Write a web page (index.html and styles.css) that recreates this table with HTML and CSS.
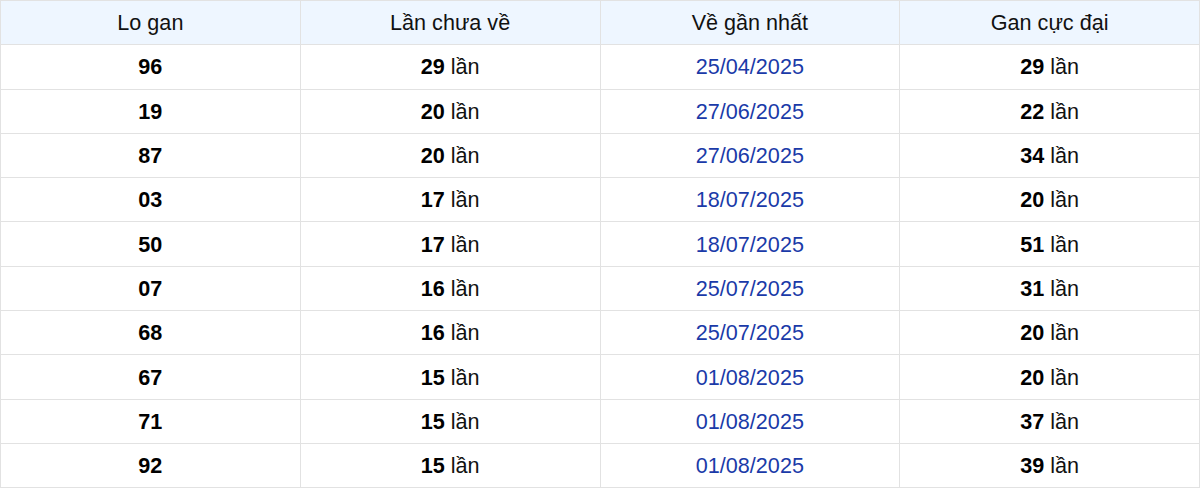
FILE: index.html
```html
<!DOCTYPE html>
<html lang="vi">
<head>
<meta charset="utf-8">
<link rel="stylesheet" href="styles.css">
</head>
<body>
<table class="gan">
  <thead>
    <tr><th>Lo gan</th><th>Lần chưa về</th><th>Về gần nhất</th><th>Gan cực đại</th></tr>
  </thead>
  <tbody>
    <tr><td><b>96</b></td><td><b>29</b> lần</td><td class="date">25/04/2025</td><td><b>29</b> lần</td></tr>
    <tr><td><b>19</b></td><td><b>20</b> lần</td><td class="date">27/06/2025</td><td><b>22</b> lần</td></tr>
    <tr><td><b>87</b></td><td><b>20</b> lần</td><td class="date">27/06/2025</td><td><b>34</b> lần</td></tr>
    <tr><td><b>03</b></td><td><b>17</b> lần</td><td class="date">18/07/2025</td><td><b>20</b> lần</td></tr>
    <tr><td><b>50</b></td><td><b>17</b> lần</td><td class="date">18/07/2025</td><td><b>51</b> lần</td></tr>
    <tr><td><b>07</b></td><td><b>16</b> lần</td><td class="date">25/07/2025</td><td><b>31</b> lần</td></tr>
    <tr><td><b>68</b></td><td><b>16</b> lần</td><td class="date">25/07/2025</td><td><b>20</b> lần</td></tr>
    <tr><td><b>67</b></td><td><b>15</b> lần</td><td class="date">01/08/2025</td><td><b>20</b> lần</td></tr>
    <tr><td><b>71</b></td><td><b>15</b> lần</td><td class="date">01/08/2025</td><td><b>37</b> lần</td></tr>
    <tr><td><b>92</b></td><td><b>15</b> lần</td><td class="date">01/08/2025</td><td><b>39</b> lần</td></tr>
  </tbody>
</table>
</body>
</html>
```

FILE: styles.css
```css
html, body {
  margin: 0;
  padding: 0;
  background: #ffffff;
}
body {
  font-family: "Liberation Sans", Arial, sans-serif;
  font-size: 21.6px;
  color: #111111;
}
.gan {
  width: 1200px;
  border-collapse: collapse;
  table-layout: fixed;
}
.gan th,
.gan td {
  border: 1px solid #e2e2e2;
  height: 43.3px;
  padding: 0;
  text-align: center;
  vertical-align: middle;
  line-height: 25px;
}
.gan th {
  background: #eef6ff;
  font-weight: 400;
  color: #111111;
}
.gan td b {
  font-weight: 700;
  color: #000;
}
.gan td.date {
  color: #1a3aa8;
}
```
